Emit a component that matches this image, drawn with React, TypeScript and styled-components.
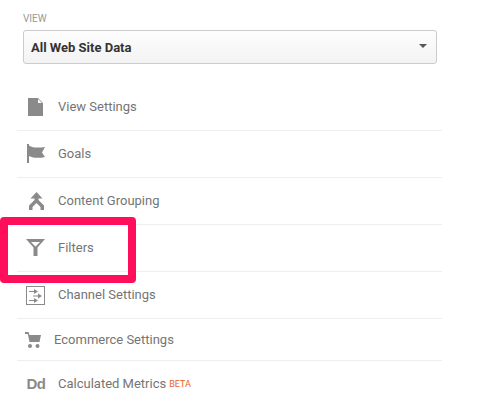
import styled, { createGlobalStyle } from 'styled-components';

const GlobalStyle = createGlobalStyle`
  html, body {
    margin: 0;
    padding: 0;
    background: #fff;
  }
  body {
    font-family: Roboto, "Liberation Sans", sans-serif;
  }
`;

const StPage = styled.div`
  position: relative;
  width: 495px;
  height: 413px;
  overflow: hidden;
  padding: 13px 0 0 17px;
  box-sizing: border-box;
`;

const StPanel = styled.div`
  width: 425px;
`;

const StViewLabel = styled.div`
  margin-left: 6px;
  font-size: 10px;
  line-height: 11px;
  color: #999;
`;

const StSelect = styled.div`
  display: flex;
  align-items: center;
  justify-content: space-between;
  box-sizing: border-box;
  width: 414px;
  height: 34px;
  margin: 6px 0 20px 6px;
  padding: 0 9px 0 7px;
  border: 1px solid #ccc;
  border-radius: 3px;
  background: linear-gradient(#fdfdfd, #f3f3f3);
  font-size: 13px;
  font-weight: 700;
  color: #333;
`;

const StCaret = styled.span`
  width: 0;
  height: 0;
  margin-bottom: 2px;
  border-left: 4px solid transparent;
  border-right: 4px solid transparent;
  border-top: 4px solid #555;
`;

const StRow = styled.div<{ $height?: number; $last?: boolean; $bottom?: number }>`
  display: flex;
  align-items: center;
  box-sizing: border-box;
  height: ${(p) => p.$height ?? 47}px;
  padding-bottom: ${(p) => p.$bottom ?? 2}px;
  border-bottom: ${(p) => (p.$last ? 'none' : '1px solid #eee')};
  font-size: 13px;
  color: #757575;
`;

const StIconBox = styled.div<{ $width?: number; $pad?: number; $top?: number }>`
  display: flex;
  justify-content: center;
  flex: none;
  box-sizing: border-box;
  width: ${(p) => p.$width ?? 41}px;
  padding-top: ${(p) => p.$top ?? 0}px;
  padding-right: ${(p) => p.$pad ?? 4}px;

  svg {
    display: block;
    fill: #8a8a8a;
  }
`;

const StLetters = styled.span`
  font-family: "Liberation Sans", sans-serif;
  font-size: 15px;
  font-weight: 700;
  line-height: 16px;
  letter-spacing: -0.5px;
  color: #8a8a8a;
`;

const StBeta = styled.span`
  margin-left: 3px;
  font-size: 9px;
  color: #e5622a;
`;

const StHighlight = styled.div`
  position: absolute;
  left: 0;
  top: 217px;
  width: 136px;
  height: 66px;
  box-sizing: border-box;
  border: 8px solid #ff0f5b;
  border-radius: 4px;
`;

function App() {
  return (
    <StPage>
      <GlobalStyle />
      <StPanel>
        <StViewLabel>VIEW</StViewLabel>
        <StSelect>
          All Web Site Data
          <StCaret />
        </StSelect>
        <StRow>
          <StIconBox $top={2}>
            <svg width="15" height="18" viewBox="0 0 15 18">
              <path d="M0 0H10L15 5V18H0Z" />
              <path d="M10 1V5H14" fill="#fff" />
            </svg>
          </StIconBox>
          View Settings
        </StRow>
        <StRow>
          <StIconBox $pad={3}>
            <svg width="18" height="19" viewBox="0 0 18 19">
              <path d="M0 0H2V1.5C6 4 11 4 18 3L15 8.5L18 13C12 14.5 6 14 2 12V19H0Z" />
            </svg>
          </StIconBox>
          Goals
        </StRow>
        <StRow>
          <StIconBox $top={2} $pad={3}>
            <svg width="15" height="18" viewBox="0 0 15 18">
              <path d="M7.5 0L13.5 6.5H9.5V8L15 13.5V18H11.5V15L7.5 11L3.5 15V18H0V13.5L5.5 8V6.5H1.5Z" />
            </svg>
          </StIconBox>
          Content Grouping
        </StRow>
        <StRow>
          <StIconBox>
            <svg width="19" height="17" viewBox="0 0 19 17">
              <path d="M0 0H19L11.5 8.5V17H7.5V8.5ZM5 3L9.5 7.5L14 3Z" fillRule="evenodd" />
            </svg>
          </StIconBox>
          Filters
        </StRow>
        <StRow>
          <StIconBox $top={2}>
            <svg width="19" height="19" viewBox="0 0 19 19">
              <path d="M0 0H19V19H0ZM1 1V18H18V1Z" fillRule="evenodd" />
              <path d="M3 5H8V3L12 5.5L8 8V6H3ZM7 9.5H12V7.5L16 10L12 12.5V10.5H7ZM3 14H8V12L12 14.5L8 17V15H3Z" />
            </svg>
          </StIconBox>
          Channel Settings
        </StRow>
        <StRow $height={42} $bottom={0}>
          <StIconBox $width={37} $pad={5}>
            <svg width="16" height="16" viewBox="0 0 16 16">
              <path d="M0 0H3.5L4.5 3H16L14.5 10H4.5L2.8 2H0Z" />
              <circle cx="5" cy="14" r="2" />
              <circle cx="12.5" cy="14" r="2" />
            </svg>
          </StIconBox>
          Ecommerce Settings
        </StRow>
        <StRow $last>
          <StIconBox $pad={3}>
            <StLetters>Dd</StLetters>
          </StIconBox>
          Calculated Metrics
          <StBeta>BETA</StBeta>
        </StRow>
      </StPanel>
      <StHighlight />
    </StPage>
  );
}

export default App;
